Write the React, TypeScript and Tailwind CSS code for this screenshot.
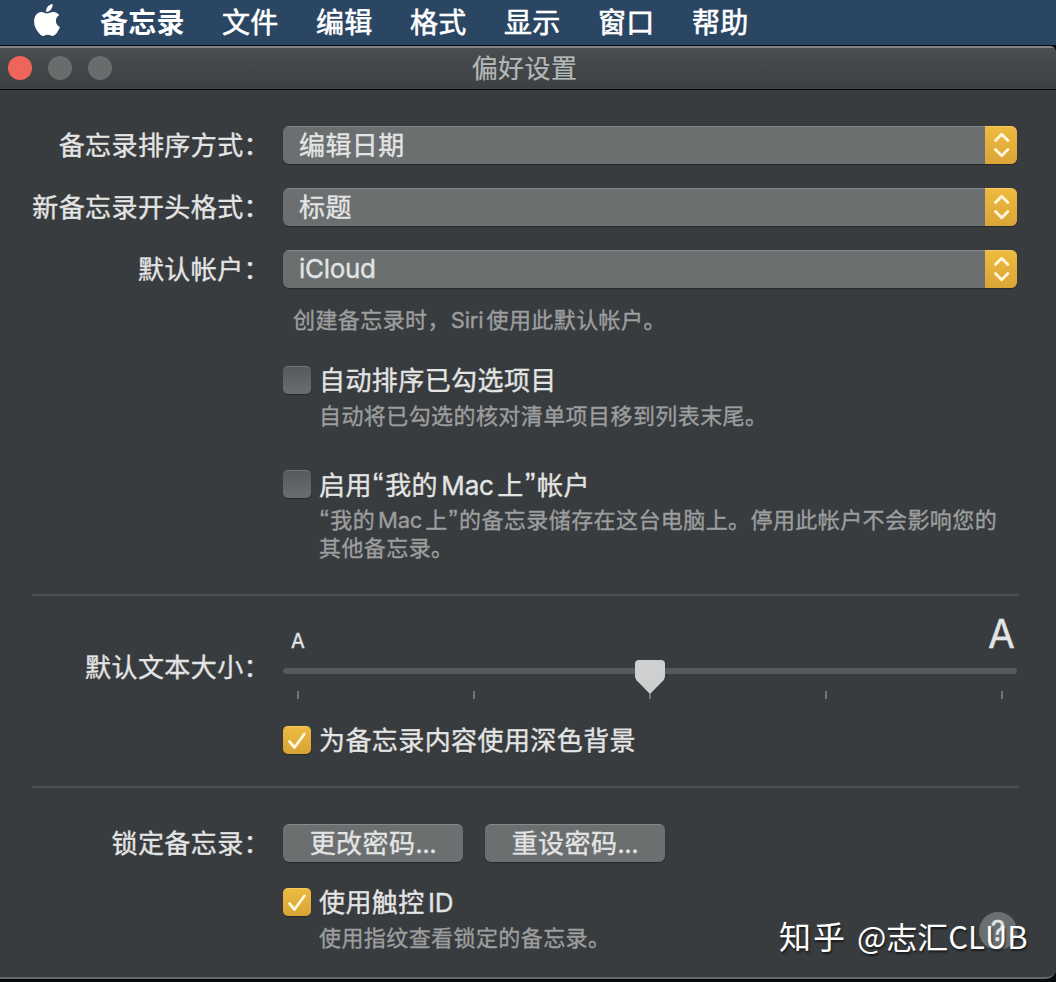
import type { ReactNode } from 'react'

const menus = ['文件', '编辑', '格式', '显示', '窗口', '帮助']
const ticks = [0, 1, 2, 3, 4]

function AppleLogo() {
  return (
    <svg className="block h-8 w-[26px]" viewBox="0 0 26 32" fill="#fff">
      <path d="M18.6.1c.3 2.1-.5 4-1.7 5.4-1.2 1.5-3 2.5-4.7 2.4-.3-2 .6-4 1.7-5.3C15.100 1.200 17.100.2 18.600.1z" />
      <path d="M25.200 11.200c-2.100 1.300-3.300 3.100-3.300 5.600 0 2.900 1.500 5.100 4 6.200-.6 1.900-1.600 3.800-2.800 5.500-1.200 1.800-2.500 3.400-4.500 3.400-1.900 0-2.500-1.200-4.800-1.200s-3 1.200-4.800 1.200c-2 0-3.400-1.700-4.700-3.600C1.700 25.500.1 21.600.1 17.600c0-5.900 3.500-9.500 7.200-9.500 2.300 0 4 1.400 5.700 1.400s3.500-1.500 6.200-1.500c2.400 0 4.600 1.100 6 3.200z" />
    </svg>
  )
}

function Row({ label, className, children }: { label?: string; className?: string; children: ReactNode }) {
  return (
    <div className={`flex ${className ?? ''}`}>
      <div className="w-[270px] shrink-0 whitespace-nowrap pt-px text-right text-[26px] leading-[38px] tracking-[0.42px]">{label}</div>
      <div className="ml-[13px] w-[734px]">{children}</div>
    </div>
  )
}

function Select({ value }: { value: string }) {
  return (
    <button className="flex h-[38px] w-full overflow-hidden rounded-[6px] bg-[#6b6f70] text-left shadow-[0_1px_1px_rgba(0,0,0,0.35)]">
      <span className={`h-full flex-1 border-t border-[#85898a] pl-4 text-[26px] ${value === 'iCloud' ? 'leading-[36px] tracking-[-0.3px]' : 'leading-[37px] tracking-[0.4px]'}`}>{value}</span>
      <span className="flex h-full w-8 items-center justify-center border-t border-[#f3cb62] bg-linear-to-b from-[#eebb3f] to-[#daa537] pb-px pl-px">
        <svg width="16" height="26" viewBox="0 0 16 26" fill="none" stroke="#fff6dc" strokeWidth="2.800" strokeLinecap="round" strokeLinejoin="round">
          <path d="M1.500 8.500 7.700 2.200l6.200 6.300M1.500 17.500 7.700 23.800l6.200-6.300" />
        </svg>
      </span>
    </button>
  )
}

function Checkbox({ checked, children }: { checked?: boolean; children: ReactNode }) {
  return (
    <label className="flex h-7 items-center">
      {checked ? (
        <span className="flex size-7 shrink-0 items-center justify-center rounded-[5px] border-t border-[#f3cb62] bg-linear-to-b from-[#edbb40] to-[#d7a336] shadow-[0_1px_1px_rgba(0,0,0,0.35)]">
          <svg width="20" height="20" viewBox="0 0 20 20" fill="none" stroke="#fff6dc" strokeWidth="2.800" strokeLinecap="round" strokeLinejoin="round">
            <path d="m2.500 10.500 5 6L17.300 3" />
          </svg>
        </span>
      ) : (
        <span className="size-7 shrink-0 rounded-[5px] border-t border-[#737677] bg-linear-to-b from-[#575a5c] to-[#6b6e70] shadow-[0_1px_1px_rgba(0,0,0,0.35)]" />
      )}
      <span className="ml-2 whitespace-nowrap pt-0.5 text-[26px] leading-7 tracking-[0.42px]">{children}</span>
    </label>
  )
}

// Latin word set inside Chinese text, with a narrow gap on each side
function Latin({ children }: { children: ReactNode }) {
  return <span className="mr-[0.14em] ml-[0.13em] tracking-[-0.2px]">{children}</span>
}

function Quote({ children }: { children: ReactNode }) {
  return <span className="mx-[0.04em] font-['Liberation_Sans',sans-serif] text-[1.2em] leading-none">{children}</span>
}

function Caption({ className, children }: { className?: string; children: ReactNode }) {
  return <p className={`whitespace-nowrap text-[22px] leading-7 tracking-[0.42px] text-[#9c9e9f] ${className ?? ''}`}>{children}</p>
}

function PushButton({ children }: { children: ReactNode }) {
  return (
    <button className="h-[38px] w-[180px] rounded-[6px] border-t border-[#85898a] bg-[#6b6f70] text-center text-[26px] leading-[36px] tracking-[0.42px] shadow-[0_1px_1px_rgba(0,0,0,0.35)]">
      {children}<span className="tracking-[-0.5px]">...</span>
    </button>
  )
}

function TextSizeSlider() {
  return (
    <div className="relative h-[86px]">
      <div className="flex h-[54px] items-end justify-between pr-0.5 pl-2">
        <span className="pb-[17px] text-[20px] leading-5">A</span>
        <span className="pb-[14px] text-[39px] leading-10">A</span>
      </div>
      <div className="h-[6px] rounded-full bg-[#565a5c]" />
      <div className="flex justify-between px-[14px] pt-[17px]">
        {ticks.map(t => (
          <span key={t} className="h-2 w-[2px] bg-[#6f7374]" />
        ))}
      </div>
      <svg className="absolute top-[46px] left-[352px]" width="30" height="34" viewBox="0 0 30 34" fill="#cdcfd0">
        <path d="M4 0h22q4 0 4 4v12q0 2.500-1.500 4.200L16 33q-1 1-2 0L1.500 20.200Q0 18.500 0 16V4q0-4 4-4z" />
      </svg>
    </div>
  )
}

export default function App() {
  return (
    <div className="flex h-[982px] w-[1056px] flex-col overflow-hidden bg-[#08090b] font-[Inter,'Noto_Sans_CJK_SC',sans-serif] text-[#e3e4e4]">
      <nav className="flex h-[45px] shrink-0 items-center bg-[#2a4663] pl-[34px] text-[28px] leading-[44px] text-white">
        <div className="-mt-[5px]">
          <AppleLogo />
        </div>
        <span className="ml-10 w-[122px] font-bold tracking-[0.3px]">备忘录</span>
        {menus.map(m => (
          <span key={m} className="w-[94px] tracking-[0.3px] [-webkit-text-stroke:0.6px]">{m}</span>
        ))}
      </nav>

      <div className="mt-px flex h-[933px] shrink-0 flex-col overflow-hidden rounded-tr-[6px] rounded-br-[10px] border-b-2 border-[#66696b] bg-[#393c3e]">
        <header className="relative flex h-[44px] shrink-0 items-center justify-center border-t-2 border-b border-t-[#818586] border-b-black bg-linear-to-b from-[#4a4e50] to-[#3c4041]">
          <div className="absolute top-[8px] left-2 flex gap-4">
            <span className="size-6 rounded-full bg-[#f0655a]" />
            <span className="size-6 rounded-full bg-[#686c6d]" />
            <span className="size-6 rounded-full bg-[#686c6d]" />
          </div>
          <h1 className="pr-[7px] text-[26px] leading-[40px] tracking-[0.4px] text-[#b5b8b9] [-webkit-text-stroke:0.2px]">偏好设置</h1>
        </header>

        <main className="relative flex-1 pt-9 [-webkit-text-stroke:0.35px]">
          <Row label="备忘录排序方式："><Select value="编辑日期" /></Row>
          <Row label="新备忘录开头格式：" className="mt-[23px]"><Select value="标题" /></Row>
          <Row label="默认帐户：" className="mt-[23px]"><Select value="iCloud" /></Row>
          <Row className="mt-[17px]">
            <Caption className="ml-[10px]">创建备忘录时，<span className="-ml-0.5"><Latin>Siri</Latin></span>使用此默认帐户。</Caption>
            <div className="mt-8">
              <Checkbox>自动排序已勾选项目</Checkbox>
              <Caption className="mt-2 ml-9">自动将已勾选的核对清单项目移到列表末尾。</Caption>
            </div>
            <div className="mt-10">
              <Checkbox>启用<Quote>“</Quote>我的<Latin>Mac</Latin>上<Quote>”</Quote>帐户</Checkbox>
              <Caption className="mt-2 ml-9 h-14">
                <Quote>“</Quote>我的<Latin>Mac</Latin>上<Quote>”</Quote>的备忘录储存在这台电脑上。停用此帐户不会影响您的
                <br />
                其他备忘录。
              </Caption>
            </div>
          </Row>

          <hr className="mt-8 mr-[37px] ml-8 border-t-2 border-[#4d5052]" />

          <Row label="默认文本大小：" className="mt-[18px] [&>div:first-child]:pt-[35px]">
            <TextSizeSlider />
            <div className="mt-[26px]">
              <Checkbox checked>为备忘录内容使用深色背景</Checkbox>
            </div>
          </Row>

          <hr className="mt-8 mr-[37px] ml-8 border-t-2 border-[#4d5052]" />

          <Row label="锁定备忘录：" className="mt-9">
            <div className="flex gap-[22px]">
              <PushButton>更改密码</PushButton>
              <PushButton>重设密码</PushButton>
            </div>
            <div className="mt-[26px]">
              <Checkbox checked>使用触控<Latin>ID</Latin></Checkbox>
              <Caption className="mt-2 ml-9">使用指纹查看锁定的备忘录。</Caption>
            </div>
          </Row>

          <button className="absolute top-[822px] left-[979px] size-[38px] rounded-full bg-[#6b6f70] text-center text-[28px] leading-[38px]">?</button>
          <div className="absolute top-[822px] left-[779px] whitespace-nowrap font-['Noto_Sans_CJK_SC',sans-serif] text-[31px] leading-[46px] text-white [-webkit-text-stroke:0] [text-shadow:1px_2px_2px_rgba(0,0,0,0.6)]">
            <span className="mr-[3px] text-[32px] tracking-[2px]">知乎</span> @志汇CLUB
          </div>
        </main>
      </div>
    </div>
  )
}
